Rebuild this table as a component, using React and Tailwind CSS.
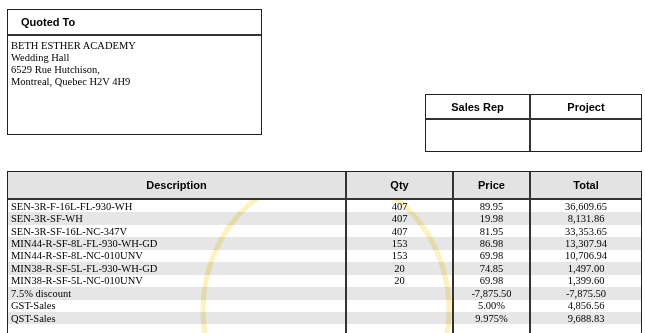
import React from "react";

const serif = { fontFamily: '"Liberation Serif", "Times New Roman", serif' };
const sans = { fontFamily: '"Liberation Sans", Arial, sans-serif' };

const rows = [
  ["SEN-3R-F-16L-FL-930-WH", "407", "89.95", "36,609.65"],
  ["SEN-3R-SF-WH", "407", "19.98", "8,131.86"],
  ["SEN-3R-SF-16L-NC-347V", "407", "81.95", "33,353.65"],
  ["MIN44-R-SF-8L-FL-930-WH-GD", "153", "86.98", "13,307.94"],
  ["MIN44-R-SF-8L-NC-010UNV", "153", "69.98", "10,706.94"],
  ["MIN38-R-SF-5L-FL-930-WH-GD", "20", "74.85", "1,497.00"],
  ["MIN38-R-SF-5L-NC-010UNV", "20", "69.98", "1,399.60"],
  ["7.5% discount", "", "-7,875.50", "-7,875.50"],
  ["GST-Sales", "", "5.00%", "4,856.56"],
  ["QST-Sales", "", "9.975%", "9,688.83"],
  ["", "", "", ""],
];

export default function App() {
  return (
    <div className="relative w-[645px] h-[333px] overflow-hidden bg-white text-black">
      <div className="flex items-start justify-between pl-[7px] pr-[3px] pt-[9px]">
        <div className="w-[255px] h-[126px] border border-[#222] flex flex-col">
          <div
            className="h-[26px] border-b-2 border-[#333] flex items-center pl-[13px] text-[11px] font-bold"
            style={sans}
          >
            Quoted To
          </div>
          <div className="pl-[3px] pt-[4px] text-[10.5px] leading-[12px]" style={serif}>
            <div>BETH ESTHER ACADEMY</div>
            <div>Wedding Hall</div>
            <div>6529 Rue Hutchison,</div>
            <div>Montreal, Quebec H2V 4H9</div>
          </div>
        </div>
        <div className="mt-[85px] w-[217px] h-[58px] border border-[#222] flex flex-col">
          <div className="h-[25px] border-b-2 border-[#333] flex text-[11px] font-bold" style={sans}>
            <div className="w-[105px] border-r-2 border-[#333] flex items-center justify-center pt-[1px]">Sales Rep</div>
            <div className="flex-1 flex items-center justify-center pt-[1px]">Project</div>
          </div>
          <div className="flex-1 flex">
            <div className="w-[105px] border-r-2 border-[#333]"></div>
            <div className="flex-1"></div>
          </div>
        </div>
      </div>

      <div className="ml-[7px] mt-[19px] w-[635px] border-l border-r border-t border-[#222]">
        <div className="h-[28px] bg-[#e3e3e3] border-b-2 border-[#333] flex text-[11px] font-bold" style={sans}>
          <div className="w-[339px] border-r-2 border-[#333] flex items-center justify-center">Description</div>
          <div className="w-[107px] border-r-2 border-[#333] flex items-center justify-center">Qty</div>
          <div className="w-[77px] border-r-2 border-[#333] flex items-center justify-center">Price</div>
          <div className="flex-1 flex items-center justify-center">Total</div>
        </div>
        <div className="relative overflow-hidden">
          {rows.map((r, i) => (
            <div
              key={i}
              className={`h-[12.45px] flex text-[10.5px] leading-[12px] ${i % 2 === 1 ? "bg-[#e6e6e6]" : "bg-white"}`}
              style={serif}
            >
              <div className="w-[339px] border-r-2 border-[#333] flex items-center pl-[3px] pt-[1px]">{r[0]}</div>
              <div className="w-[107px] border-r-2 border-[#333] flex items-center justify-center pt-[1px]">{r[1]}</div>
              <div className="w-[77px] border-r-2 border-[#333] flex items-center justify-center pt-[1px]">{r[2]}</div>
              <div className="flex-1 flex items-center justify-center pt-[1px]">{r[3]}</div>
            </div>
          ))}
          <svg
            className="absolute left-[-8px] top-[-200px] w-[645px] h-[333px] pointer-events-none mix-blend-multiply"
            viewBox="0 0 645 333"
          >
            <ellipse cx="326" cy="310" rx="123" ry="135" fill="none" stroke="#fdf1bd" strokeWidth="5" />
          </svg>
        </div>
      </div>
    </div>
  );
}
